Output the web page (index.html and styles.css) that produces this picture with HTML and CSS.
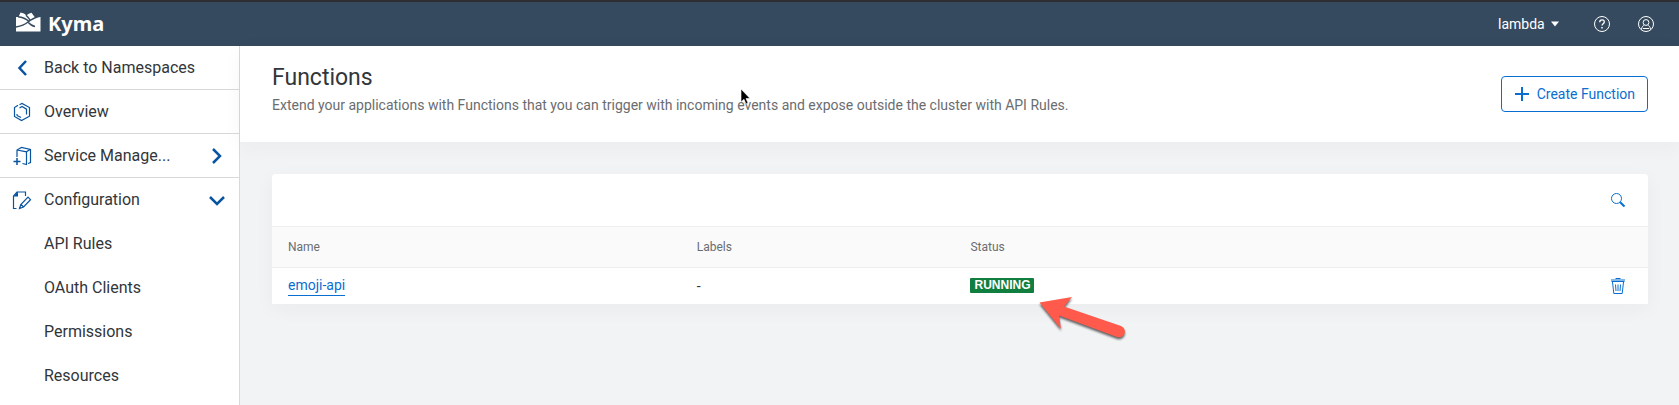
FILE: index.html
```html
<!DOCTYPE html>
<html lang="en">
<head>
<meta charset="utf-8">
<meta name="viewport" content="width=device-width, initial-scale=1">
<title>Kyma - Functions</title>
<link rel="stylesheet" href="styles.css">
</head>
<body>
<header class="topbar">
  <a class="brand" href="#">
    <svg width="25" height="20" viewBox="0 0 25 20" aria-hidden="true">
      <path fill="#fff" d="M0 5L2.500 5L4.500 .5C7 .8 9 2 10.500 3.500C12 2 13.500 1.200 15.500 .8L19 5.500L24.500 4.500V19.500H0Z"/>
      <path fill="none" stroke="#364a5f" stroke-width="1.500" d="M0 15C6 14 9 12.500 12 10C15.500 7 18.500 5.500 25 4M2 4.800C7.500 5.300 10.500 7.200 13 9.500M10 3.200C12 5 13.200 6.500 14 8M12 10C14 12.500 17 14.200 19 14.500"/>
    </svg>
    <span>Kyma</span>
  </a>
  <div class="tools">
    <label class="namespace">
      <select class="namespace-select" aria-label="Namespace"><option>lambda</option></select>
      <svg width="8" height="6" viewBox="0 0 8 6" aria-hidden="true"><path fill="#fff" d="M0 .5h8L4 5.500Z"/></svg>
    </label>
    <button class="icon-button" type="button" aria-label="Help">
      <svg width="18" height="18" viewBox="0 0 18 18" fill="none" stroke="#fff" aria-hidden="true"><circle cx="9" cy="9" r="7.500"/><path stroke-width="1.300" d="M6.700 7.200C6.700 4 11.400 4.200 11.300 6.900C11.200 8.700 9 8.700 9 10.500"/><path stroke-width="1.500" d="M9 12v1.500"/></svg>
    </button>
    <button class="icon-button" type="button" aria-label="Profile">
      <svg width="18" height="18" viewBox="0 0 18 18" fill="none" stroke="#fff" aria-hidden="true"><circle cx="9" cy="9" r="7.500"/><circle cx="9" cy="7.500" r="2.900"/><path d="M4.500 14.500C4.700 11.800 6 10.800 7.200 10.200M10.800 10.200C12 10.800 13.300 11.800 13.500 14.500M6 13.500h6"/></svg>
    </button>
  </div>
</header>
<div class="shell">
  <nav class="sidebar" aria-label="Main">
    <a class="nav-item ruled" href="#">
      <svg class="nav-icon" width="20" height="20" viewBox="0 0 20 20" aria-hidden="true"><path class="chevron" d="M14 3L7.500 10L14 17"/></svg>
      <span class="nav-text">Back to Namespaces</span>
    </a>
    <a class="nav-item ruled" href="#">
      <svg class="nav-icon" width="20" height="20" viewBox="0 0 20 20" aria-hidden="true"><path class="line" d="M6 3.200L2.500 5.500V14.500L9.500 18.500L17.500 14.200V5.500L10 1.500L7.500 2.700M7.500 6L10 4.500L14.500 7.200V12.500M5 13.500L9 15.500M5 13.500V12"/></svg>
      <span class="nav-text">Overview</span>
    </a>
    <a class="nav-item ruled" href="#">
      <svg class="nav-icon" width="20" height="20" viewBox="0 0 20 20" aria-hidden="true"><path class="line" d="M5 11V4L9.500 1.500L18.500 3.500V16.500L16 17.500M5 4L14.500 5.800V18.500L10.500 17.500M14.500 5.800L18 3.500"/><path class="line bold" d="M1.500 15.500h7M5 12v7"/></svg>
      <span class="nav-text">Service Manage...</span>
      <svg class="nav-arrow" width="18" height="18" viewBox="0 0 18 18" aria-hidden="true"><path class="chevron" d="M5 2L12 9L5 16"/></svg>
    </a>
    <a class="nav-item" href="#">
      <svg class="nav-icon" width="20" height="20" viewBox="0 0 20 20" aria-hidden="true"><path class="line" d="M4.500 18.500H1.500V6L5 2H13.500V6M7.500 18.500L8.800 14.500L16 7.200L18.500 9.700L11.500 17ZM9 14.500L11.500 17"/><path fill="#0854a0" d="M1.500 6.500L6 1.500V6.500Z"/></svg>
      <span class="nav-text">Configuration</span>
      <svg class="nav-arrow" width="18" height="18" viewBox="0 0 18 18" aria-hidden="true"><path class="chevron" d="M2 6L9 13L16 6"/></svg>
    </a>
    <a class="nav-item nested" href="#">API Rules</a>
    <a class="nav-item nested" href="#">OAuth Clients</a>
    <a class="nav-item nested" href="#">Permissions</a>
    <a class="nav-item nested" href="#">Resources</a>
  </nav>
  <main class="content">
    <section class="page-head">
      <div>
        <h1 class="title">Functions</h1>
        <p class="description">Extend your applications with Functions that you can trigger with incoming events and expose outside the cluster with API Rules.</p>
      </div>
      <button class="create" type="button">
        <svg width="16" height="16" viewBox="0 0 16 16" aria-hidden="true"><path stroke="#0a6ed1" stroke-width="2" d="M1 8h14M8 1v14"/></svg>
        <span>Create Function</span>
      </button>
    </section>
    <section class="panel">
      <div class="panel-tools">
        <button class="icon-button" type="button" aria-label="Search">
          <svg width="16" height="16" viewBox="0 0 16 16" fill="none" stroke="#0a6ed1" aria-hidden="true"><circle cx="6.500" cy="6.500" r="5"/><path stroke-width="2" d="M10.200 10.200L14.500 14.500"/></svg>
        </button>
      </div>
      <table class="functions">
        <thead>
          <tr><th class="col-name" scope="col">Name</th><th class="col-labels" scope="col">Labels</th><th class="col-status" scope="col">Status</th><th class="col-action"></th></tr>
        </thead>
        <tbody>
          <tr>
            <td><a class="link" href="#">emoji-api</a></td>
            <td>-</td>
            <td><span class="badge">RUNNING</span></td>
            <td class="action">
              <button class="icon-button" type="button" aria-label="Delete">
                <svg width="16" height="18" viewBox="0 0 16 18" fill="none" stroke="#0a6ed1" aria-hidden="true"><path d="M5.500 1.500h5M1 3h14M1.500 4.500h13M2.500 5L3.800 16.500H12.200L13.500 5M5.500 7.500L6 14M8 7.500V14M10.500 7.500L10 14"/></svg>
              </button>
            </td>
          </tr>
        </tbody>
      </table>
    </section>
  </main>
</div>
<svg class="cursor" width="12" height="18" viewBox="0 0 12 18" aria-hidden="true"><path fill="#000" stroke="#fff" stroke-width=".6" d="M1 1V14L4 11.300L6 16L8 15L6 10.500H10Z"/></svg>
<svg class="pointer-arrow" width="94" height="50" viewBox="0 0 94 50" aria-hidden="true"><path fill="#ff5a4b" d="M2.500 5.500L35 0L27 9.500L84 29A5.500 5.500 0 0 1 80 40L22 18.500L24 32Z"/></svg>
</body>
</html>
```
FILE: styles.css
```css
* { box-sizing: border-box; }
body {
  margin: 0;
  min-height: 100vh;
  display: flex;
  flex-direction: column;
  font-family: Roboto, "Noto Sans", sans-serif;
  font-size: 14px;
  line-height: 20px;
  color: #32363a;
  background: #f2f3f5;
}
a { color: inherit; text-decoration: none; }
button, select { font: inherit; }
svg { flex: none; }
.topbar {
  display: flex;
  justify-content: space-between;
  align-items: center;
  height: 46px;
  border-top: 2px solid #2e2e33;
  padding: 0 24px 0 16px;
  color: #fff;
  background: #364a5f;
}
.brand { display: flex; align-items: center; gap: 7px; font-family: "Noto Sans", sans-serif; font-size: 20px; font-weight: 700; line-height: 24px; }
.brand svg { margin-bottom: 4px; }
.tools { display: flex; align-items: center; gap: 26px; }
.namespace { display: flex; align-items: center; gap: 6px; margin-right: 8px; }
.namespace-select { appearance: none; padding: 0; border: 0; color: #fff; background: transparent; }
.icon-button { display: flex; padding: 0; border: 0; background: transparent; cursor: pointer; }
.shell { display: flex; flex: 1; }
.sidebar { flex: none; width: 240px; background: #fff; border-right: 1px solid #d9d9d9; }
.nav-item { display: flex; align-items: center; height: 44px; padding: 0 12px; font-size: 16px; border-bottom: 1px solid transparent; }
.ruled { border-bottom-color: #d9d9d9; }
.nested { padding-left: 44px; }
.nav-icon { margin-right: 12px; }
.nav-text { flex: 1; white-space: nowrap; }
.nav-arrow { margin-right: 1px; }
.chevron { fill: none; stroke: #0854a0; stroke-width: 2.5; }
.line { fill: none; stroke: #0854a0; stroke-width: 1.2; }
.bold { stroke-width: 1.5; }
.content { flex: 1; min-width: 0; }
.page-head {
  display: flex;
  justify-content: space-between;
  align-items: center;
  height: 96px;
  padding: 0 31px 0 32px;
  background: #fff;
  box-shadow: 0 5px 20px rgba(50, 54, 58, .04);
}
.title { margin: 0; font-size: 23px; font-weight: 400; line-height: 28px; }
.description { margin: 3px 0 9px; color: #6a6d70; }
.create {
  display: flex;
  align-items: center;
  gap: 7px;
  height: 36px;
  padding: 0 12px;
  border: 1px solid #0a6ed1;
  border-radius: 4px;
  color: #0a6ed1;
  background: #fff;
}
.panel { margin: 32px 31px 32px 32px; border-radius: 4px 4px 0 0; background: #fff; box-shadow: 0 5px 20px rgba(50, 54, 58, .04); }
.panel-tools { display: flex; align-items: center; justify-content: flex-end; height: 52px; padding: 0 22px; }
.functions { width: 100%; table-layout: fixed; border-collapse: collapse; }
.functions th, .functions td { padding: 0 16px; text-align: left; }
.functions th { height: 41px; font-size: 12px; font-weight: 400; color: #6a6d70; background: #fafafa; border-top: 1px solid #eee; border-bottom: 1px solid #eee; }
.functions td { height: 36px; }
.col-name { width: 29.7%; }
.col-labels { width: 19.9%; }
.col-status { width: 40%; }
.functions .action { padding-right: 22px; }
.action .icon-button { margin-left: auto; }
.link { display: inline-block; color: #0a6ed1; border-bottom: 1px solid #0a6ed1; }
.badge { display: block; width: fit-content; padding: 0 4px; border-radius: 1px; font-family: "Liberation Sans", sans-serif; font-size: 12px; font-weight: 700; line-height: 15px; color: #fff; background: #107e3e; }
.cursor { position: absolute; left: 740px; top: 88px; }
.pointer-arrow { position: absolute; left: 1037px; top: 297px; overflow: visible; filter: drop-shadow(0 2px 1px rgba(0, 0, 0, .6)); }
```
